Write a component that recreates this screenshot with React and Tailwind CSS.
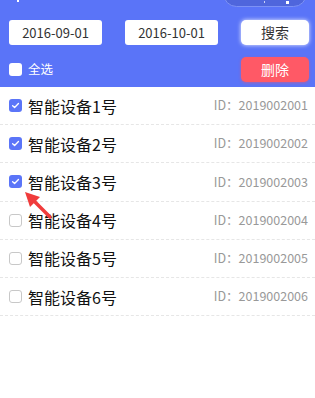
import { useState } from 'react';

const devices = [1, 2, 3, 4, 5, 6].map((n) => ({
  name: `智能设备${n}号`,
  id: `201900200${n}`,
  checked: n <= 3,
}));

const Check = ({ on, light }) => (
  <span
    className={
      on
        ? 'flex h-[13px] w-[13px] shrink-0 items-center justify-center rounded-[3px] bg-[#5b75f8]'
        : light
        ? 'h-[13px] w-[13px] shrink-0 rounded-[3px] bg-white'
        : 'h-[13px] w-[13px] shrink-0 rounded-[3px] border border-[#c8c8c8] bg-white'
    }
  >
    {on && (
      <svg width="9" height="9" viewBox="0 0 10 10">
        <path d="M1.8 5.2 L4 7.2 L8.3 2.8" fill="none" stroke="white" strokeWidth="1.5" strokeLinecap="round" strokeLinejoin="round" />
      </svg>
    )}
  </span>
);

export default function App() {
  const [rows] = useState(devices);

  return (
    <div className="relative h-[398px] w-[315px] overflow-hidden bg-white" style={{ fontFamily: '"Noto Sans CJK SC", "Liberation Sans", sans-serif' }}>
      {/* 顶部蓝色区域 */}
      <div className="relative h-[87px] bg-[#5a74f8] pl-[9px] pr-[6px] pt-[20px]">
        <div className="absolute right-[8px] top-[-20px] h-[27px] w-[84px] rounded-full border border-[#7d92f5] bg-[#4f66dc]">
          <span className="absolute bottom-[3px] left-[40px] h-[2px] w-[1px] bg-white/70" />
          <span className="absolute bottom-[2px] left-[62px] h-[3px] w-[3px] bg-white" />
        </div>
        <span className="absolute left-[17px] top-0 h-[2px] w-[2px] bg-white" />

        <div className="flex items-center">
          <div className="flex h-[25px] w-[93px] items-center justify-center rounded-[3px] bg-white text-[13px] text-[#333]">2016-09-01</div>
          <div className="ml-[23px] flex h-[25px] w-[93px] items-center justify-center rounded-[3px] bg-white text-[13px] text-[#333]">2016-10-01</div>
          <div className="ml-auto flex h-[25px] w-[68px] items-center justify-center rounded-[5px] bg-white text-[14px] text-[#333] shadow-[0_0_4px_rgba(255,255,255,0.9)]">搜索</div>
        </div>
        <div className="mt-[12px] flex items-center">
          <Check light />
          <span className="ml-[6px] text-[12.5px] text-white">全选</span>
          <div className="ml-auto flex h-[25px] w-[68px] items-center justify-center rounded-[5px] bg-[#ff5966] text-[14px] text-white shadow-[0_1px_3px_rgba(255,80,90,0.5)]">删除</div>
        </div>
      </div>

      {/* 设备列表 */}
      <div>
        {rows.map((d) => (
          <div key={d.id} className="flex h-[38.2px] items-center border-b border-dashed border-[#e6e6e6] pl-[9px] pr-[7px]">
            <Check on={d.checked} />
            <span className="ml-[6px] text-[16px] text-[#111]">{d.name}</span>
            <span className="ml-auto text-[12.5px] text-[#999]">ID：{d.id}</span>
          </div>
        ))}
      </div>

      {/* 红色箭头标注 */}
      <svg className="absolute left-0 top-0" width="315" height="398" viewBox="0 0 315 398">
        <line x1="50" y1="217" x2="32" y2="199" stroke="#f03c3c" strokeWidth="3.5" strokeLinecap="round" />
        <polygon points="25,192 40,197 30,207" fill="#f03c3c" />
      </svg>
    </div>
  );
}
